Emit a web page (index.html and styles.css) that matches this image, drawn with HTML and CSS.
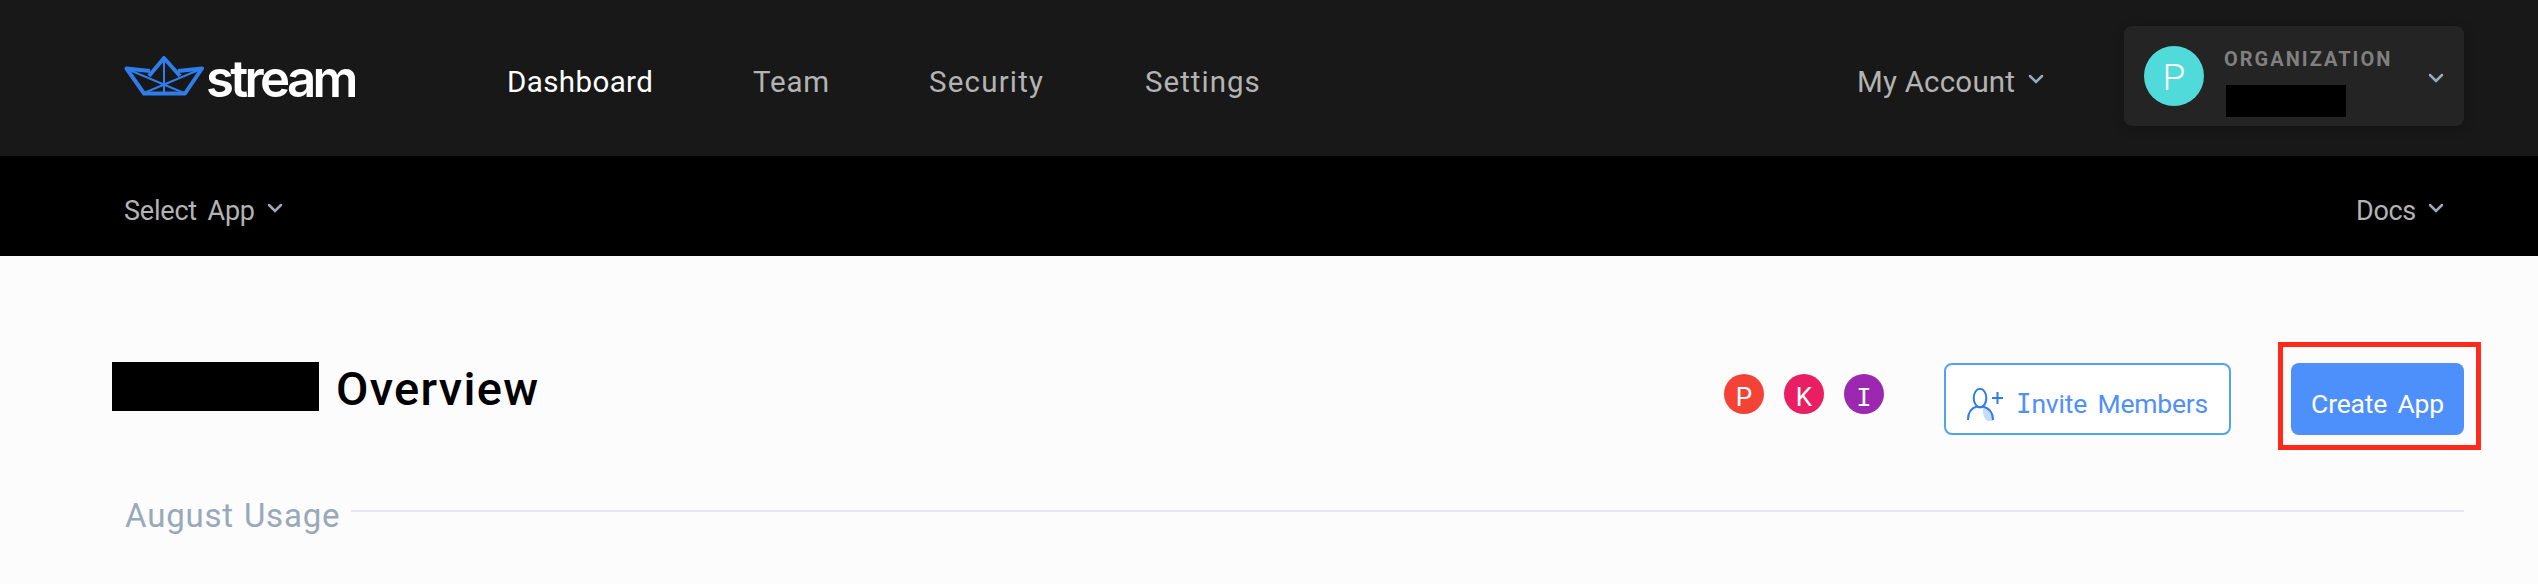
FILE: index.html
```html
<!DOCTYPE html>
<html lang="en">
<head>
<meta charset="utf-8">
<title>Stream Dashboard</title>
<link rel="stylesheet" href="styles.css">
</head>
<body>
<header class="topbar">
  <a class="logo">
    <svg class="boat" width="80" height="40" viewBox="0 0 80 40" fill="none" stroke="#2f7deb" stroke-linejoin="round">
      <path d="M25 20 40 2 56 20M26 15 2.5 12.5 20 37.500H61L78 12.500 54 15" stroke-width="4"/>
      <path d="M40 3V37M3 13 60 37M77 13 20 37" stroke-width="2"/>
    </svg>
    <span class="wordmark">stream</span>
  </a>
  <nav class="nav">
    <a class="active">Dashboard</a>
    <a class="team">Team</a>
    <a class="security">Security</a>
    <a class="settings">Settings</a>
  </nav>
  <div class="account"><span>My Account</span><svg class="chevron" width="16" height="10" viewBox="0 0 16 10"><path d="M2 2 8 8 14 2"/></svg></div>
  <div class="org">
    <span class="org-avatar">P</span>
    <div class="org-info">
      <span class="org-label">ORGANIZATION</span>
      <span class="org-name"></span>
    </div>
    <svg class="chevron" width="16" height="10" viewBox="0 0 16 10"><path d="M2 2 8 8 14 2"/></svg>
  </div>
</header>
<div class="subbar">
  <div class="menu select"><span>Select App</span><svg class="chevron" width="16" height="10" viewBox="0 0 16 10"><path d="M2 2 8 8 14 2"/></svg></div>
  <div class="menu docs"><span>Docs</span><svg class="chevron" width="16" height="10" viewBox="0 0 16 10"><path d="M2 2 8 8 14 2"/></svg></div>
</div>
<main class="content">
  <div class="overview">
    <span class="redacted"></span>
    <h1>Overview</h1>
    <div class="members">
      <span class="member red">P</span>
      <span class="member pink">K</span>
      <span class="member purple"><span class="slab">I</span></span>
    </div>
    <button class="invite">
      <svg width="38" height="36" viewBox="0 0 38 36" fill="none" stroke="#2f7deb" stroke-width="2">
        <path d="M15 3C22 5 21 16 17 20C16 24 18 33 22 34H27C28 27 25 21 19 20C23 14 22 3 15 3Z" fill="#c7dcfa" stroke="none"/>
        <ellipse cx="14" cy="11" rx="6.3" ry="9.2"/>
        <path d="M2 33C2 25 5 21 11 19.500C13 20.500 15 20.500 17 19.500C23 21 27 25 27 33M26 11H37M31.500 5V17"/>
      </svg>
      <span><span class="slab">I</span>nvite Members</span>
    </button>
    <div class="highlight"><button class="create">Create App</button></div>
  </div>
  <div class="section-title"><h2>August Usage</h2><span class="rule"></span></div>
</main>
</body>
</html>
```
FILE: styles.css
```css
* { box-sizing: border-box; }
body {
  margin: 0;
  height: 584px;
  overflow: hidden;
  background: #fcfcfc;
  font-family: Roboto, "Liberation Sans", sans-serif;
  white-space: nowrap;
}
h1, h2 { margin: 0; }
button { font: inherit; margin: 0; padding: 0; }
.topbar {
  display: flex;
  align-items: center;
  height: 156px;
  padding: 0 74px 0 124px;
  background: #181818;
  color: #b3b3b3;
  font-size: 29.5px;
}
.logo { display: flex; width: 383px; height: 44px; }
.boat { flex: none; }
.wordmark {
  margin: 1px 0 0 2px;
  font: 600 51px/44px Inter, sans-serif;
  letter-spacing: -3.7px;
  color: #fff;
}
.nav {
  display: grid;
  grid-template-columns: 246px 176px 216px auto;
  padding-top: 8px;
}
.active { color: #fff; letter-spacing: 0.4px; }
.team { letter-spacing: 0.8px; }
.security { letter-spacing: 1.2px; }
.settings { letter-spacing: 1px; }
.account {
  display: flex;
  justify-content: space-between;
  width: 187px;
  margin: 8px 80px 0 auto;
  letter-spacing: 0.2px;
}
.chevron {
  flex: none;
  fill: none;
  stroke: #9aaab9;
  stroke-width: 2.5;
  stroke-linecap: round;
}
.account .chevron { margin-top: 9px; }
.org {
  display: flex;
  width: 340px;
  height: 100px;
  margin-bottom: 4px;
  padding: 20px;
  border-radius: 8px;
  background: #242424;
  box-shadow: 0 2px 12px rgba(0, 0, 0, 0.2);
}
.org-avatar {
  flex: none;
  width: 60px;
  height: 60px;
  border-radius: 50%;
  background: #51dada;
  color: #fff;
  font: 300 37px/63px Roboto, sans-serif;
  text-align: center;
}
.org-info { display: flex; flex-direction: column; width: 204px; padding-left: 20px; }
.org-label {
  flex: none;
  height: 39px;
  color: #808080;
  font-size: 20px;
  font-weight: 700;
  line-height: 26px;
  letter-spacing: 2px;
}
.org-name { flex: none; width: 120px; height: 32px; margin-left: 2px; background: #000; }
.org .chevron { margin: 27px 0 0 20px; }
.subbar {
  display: flex;
  justify-content: space-between;
  height: 100px;
  padding: 39px 94px 0 124px;
  background: #000;
  color: #b3b3b3;
  font-size: 27px;
  line-height: 32px;
}
.menu { display: flex; justify-content: space-between; }
.select { width: 159px; letter-spacing: -0.2px; word-spacing: 4px; }
.docs { width: 88px; letter-spacing: -0.3px; }
.menu .chevron { margin-top: 8px; }
.content { padding: 86px 57px 0 112px; }
.overview { display: flex; height: 108px; }
.redacted { width: 207px; height: 49px; margin-top: 20px; background: #000; }
h1 {
  margin: 19px 0 0 17px;
  font-size: 47px;
  font-weight: 500;
  line-height: 56px;
  letter-spacing: 1.3px;
}
.members { display: flex; gap: 20px; margin: 32px 60px 0 auto; }
.member {
  width: 40px;
  height: 40px;
  border-radius: 50%;
  color: #fff;
  font-size: 26px;
  line-height: 46px;
  text-align: center;
}
.slab { font-family: "DejaVu Sans Mono", monospace; font-size: 0.98em; }
.red { background: #f44336; }
.pink { background: #e91e63; }
.purple { background: #9c27b0; }
.invite {
  display: flex;
  width: 287px;
  height: 72px;
  margin: 21px 47px 0 0;
  padding: 22px 0 0 20px;
  border: 2px solid #50a4ee;
  border-radius: 8px;
  background: #fff;
  color: #5190fa;
  font-size: 26.5px;
  line-height: 32px;
  letter-spacing: -0.2px;
  word-spacing: 4px;
}
.invite > span { margin: 1px 0 0 12px; }
.highlight {
  width: 203px;
  height: 108px;
  padding: 16px 8px;
  border: 5px solid #ff2a1c;
}
.create {
  width: 173px;
  height: 72px;
  padding-top: 9px;
  border: 0;
  border-radius: 8px;
  background: #4d90fb;
  color: #fff;
  font-size: 26.5px;
  letter-spacing: -0.2px;
  word-spacing: 4px;
}
.section-title { display: flex; gap: 11px; padding: 45px 17px 0 13px; }
h2 {
  width: 215px;
  margin-top: 1px;
  color: #98a9b9;
  font-size: 33px;
  font-weight: 400;
  line-height: 40px;
  letter-spacing: 0.8px;
  word-spacing: 1px;
}
.rule { flex: 1; height: 2px; margin-top: 15px; background: #e6e8ed; }
```
